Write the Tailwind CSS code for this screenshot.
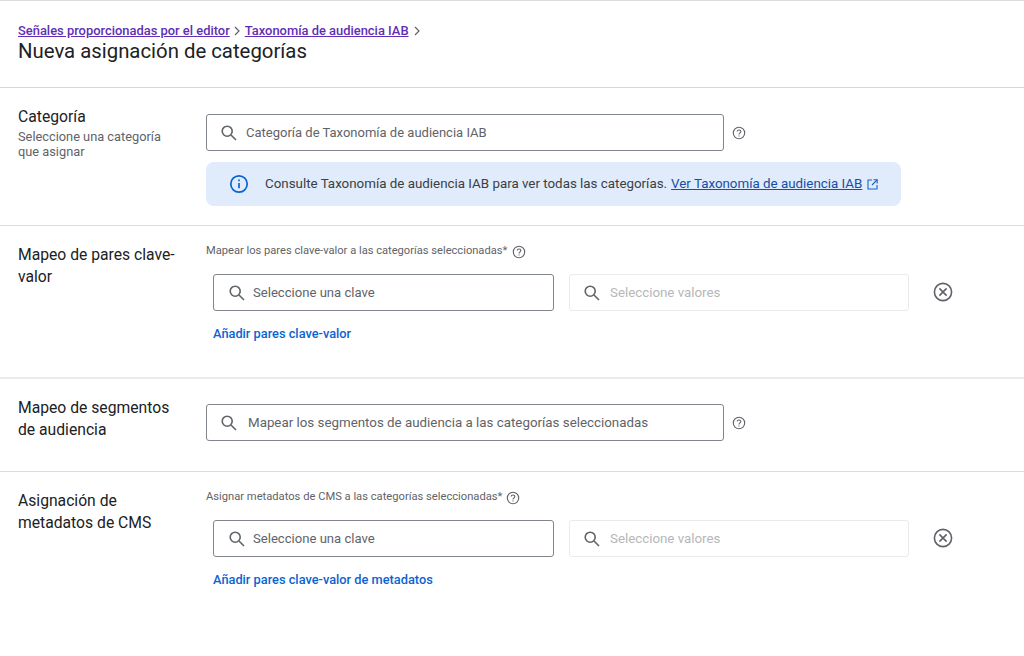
<!DOCTYPE html>
<html lang="es">
<head>
    <meta charset="UTF-8">
    <title>Nueva asignación de categorías</title>
    <script src="https://cdn.jsdelivr.net/npm/@tailwindcss/browser@4"></script>
</head>
<body class="bg-white font-['Roboto',sans-serif] w-[1024px] h-[656px] overflow-hidden">
    <!-- Header -->
    <header class="h-[88px] border-t border-b border-t-[#dadce0] border-b-[#d5d6da] pl-[18px] pt-[21px]">
        <nav class="flex items-center h-[18px] text-[12.92px] font-medium leading-[18px] text-[#5f2eb5]">
            <a href="#" class="underline">Señales proporcionadas por el editor</a>
            <svg class="w-[10px] h-[10px] ml-[2px] mr-[3px]" viewBox="0 0 10 10" fill="none" stroke="#5f6368" stroke-width="1.2"><path d="M3 1l4 4-4 4"/></svg>
            <a href="#" class="underline">Taxonomía de audiencia IAB</a>
            <svg class="w-[10px] h-[10px] mx-[3px]" viewBox="0 0 10 10" fill="none" stroke="#5f6368" stroke-width="1.2"><path d="M3 1l4 4-4 4"/></svg>
        </nav>
        <h1 class="text-[20.35px] leading-[24px] -mt-px text-[#202124]">Nueva asignación de categorías</h1>
    </header>

    <!-- Categoria -->
    <section class="flex h-[138px] border-b border-[#dadce0]">
        <div class="w-[206px] pl-[18px] pt-[19px] shrink-0">
            <h2 class="text-[15.7px] leading-[20px] font-[450] text-[#202124]">Categoría</h2>
            <p class="text-[12.8px] leading-[15px] text-[#5f6368] w-[160px] mt-[2px]">Seleccione una categoría que asignar</p>
        </div>
        <div class="pt-[26px]">
            <div class="flex items-center">
                <div class="flex items-center w-[518px] h-[37px] border border-[#80868b] rounded-[3px] pl-[13px] pt-px text-[13px] text-[#5f6368]">
                    <svg class="w-[18px] h-[18px] mr-[8px] -mt-px" viewBox="0 0 18 18" fill="none" stroke="#5f6368" stroke-width="1.6"><circle cx="7.2" cy="7.2" r="5"/><path d="M11 11l5 5"/></svg>
                    Categoría de Taxonomía de audiencia IAB
                </div>
                <svg class="w-[14px] h-[14px] ml-[8px]" viewBox="0 0 14 14" fill="none" stroke="#5f6368" stroke-width="1.1"><circle cx="7" cy="7" r="5.7"/><path d="M5.2 5.6c0-1 .8-1.6 1.8-1.6s1.8.7 1.8 1.6c0 1.3-1.8 1.3-1.8 2.8"/><path d="M7 9.4v1.1"/></svg>
            </div>
            <div class="flex items-center w-[695px] h-[44px] mt-[11px] bg-[#e0ecfb] rounded-[8px] pl-[23px] pt-px text-[13.35px] text-[#3c4043]">
                <svg class="w-[20px] h-[20px] mr-[16px] -mt-px" viewBox="0 0 20 20" fill="none" stroke="#0b63d1" stroke-width="1.7"><circle cx="10" cy="10" r="8.2"/><path d="M10 9v5.2"/><path d="M10 5.4v1.8"/></svg>
                <span>Consulte Taxonomía de audiencia IAB para ver todas las categorías.</span>
                <a href="#" class="underline text-[#174ea6] ml-[4px]">Ver Taxonomía de audiencia IAB</a>
                <svg class="w-[11px] h-[11px] ml-[5px] -mt-px" viewBox="0 0 11 11" fill="none" stroke="#1a62c4" stroke-width="1.1"><path d="M5 1H1v9h9V6"/><path d="M6.5.8h3.7v3.7"/><path d="M10 1L5 6"/></svg>
            </div>
        </div>
    </section>

    <!-- Mapeo de pares -->
    <section class="flex h-[153px] border-b-2 border-[#ebebee]">
        <div class="w-[206px] pl-[18px] pt-[18px] shrink-0">
            <h2 class="text-[15.7px] leading-[22px] font-[450] text-[#202124] w-[162px]">Mapeo de pares clave-valor</h2>
        </div>
        <div class="pt-[16px]">
            <div class="flex items-center h-[18px] text-[11.14px] text-[#5f6368]">
                Mapear los pares clave-valor a las categorías seleccionadas*
                <svg class="w-[14px] h-[14px] ml-[5px] mt-px" viewBox="0 0 14 14" fill="none" stroke="#5f6368" stroke-width="1.1"><circle cx="7" cy="7" r="5.7"/><path d="M5.2 5.6c0-1 .8-1.6 1.8-1.6s1.8.7 1.8 1.6c0 1.3-1.8 1.3-1.8 2.8"/><path d="M7 9.4v1.1"/></svg>
            </div>
            <div class="flex items-center ml-[7px] mt-[14px]">
                <div class="flex items-center w-[341px] h-[37px] border border-[#80868b] rounded-[3px] pl-[14px] pt-px text-[13.1px] text-[#5f6368]">
                    <svg class="w-[18px] h-[18px] mr-[7px] -mt-px" viewBox="0 0 18 18" fill="none" stroke="#5f6368" stroke-width="1.6"><circle cx="7.2" cy="7.2" r="5"/><path d="M11 11l5 5"/></svg>
                    Seleccione una clave
                </div>
                <div class="flex items-center w-[340px] h-[37px] ml-[15px] border border-[#e8eaed] rounded-[3px] pl-[13px] pt-px text-[13.3px] text-[#b5b7ba]">
                    <svg class="w-[18px] h-[18px] mr-[9px] -mt-px" viewBox="0 0 18 18" fill="none" stroke="#5f6368" stroke-width="1.6"><circle cx="7.2" cy="7.2" r="5"/><path d="M11 11l5 5"/></svg>
                    Seleccione valores
                </div>
                <svg class="w-[20px] h-[20px] ml-[24px] -mt-[2px]" viewBox="0 0 20 20" fill="none" stroke="#5f6368" stroke-width="1.6"><circle cx="10" cy="10" r="8.6"/><path d="M6.4 6.4l7.2 7.2M13.6 6.4l-7.2 7.2"/></svg>
            </div>
            <a href="#" class="block ml-[7px] mt-[14px] text-[12.8px] leading-[18px] font-medium text-[#0b63d1]">Añadir pares clave-valor</a>
        </div>
    </section>

    <!-- Mapeo de segmentos -->
    <section class="flex h-[93px] border-b border-[#dadce0]">
        <div class="w-[206px] pl-[18px] pt-[18px] shrink-0">
            <h2 class="text-[15.7px] leading-[22px] font-[450] text-[#202124] w-[162px]">Mapeo de segmentos de audiencia</h2>
        </div>
        <div class="pt-[25px] flex items-start">
            <div class="flex items-center w-[518px] h-[37px] border border-[#80868b] rounded-[3px] pl-[13px] pt-px text-[13.33px] text-[#5f6368]">
                <svg class="w-[18px] h-[18px] mr-[10px] -mt-px" viewBox="0 0 18 18" fill="none" stroke="#5f6368" stroke-width="1.6"><circle cx="7.2" cy="7.2" r="5"/><path d="M11 11l5 5"/></svg>
                Mapear los segmentos de audiencia a las categorías seleccionadas
            </div>
            <svg class="w-[14px] h-[14px] ml-[8px] mt-[12px]" viewBox="0 0 14 14" fill="none" stroke="#5f6368" stroke-width="1.1"><circle cx="7" cy="7" r="5.7"/><path d="M5.2 5.6c0-1 .8-1.6 1.8-1.6s1.8.7 1.8 1.6c0 1.3-1.8 1.3-1.8 2.8"/><path d="M7 9.4v1.1"/></svg>
        </div>
    </section>

    <!-- Metadatos -->
    <section class="flex">
        <div class="w-[206px] pl-[18px] pt-[18px] shrink-0">
            <h2 class="text-[15.7px] leading-[22px] font-[450] text-[#202124] w-[162px]">Asignación de metadatos de CMS</h2>
        </div>
        <div class="pt-[16px]">
            <div class="flex items-center h-[18px] text-[11.18px] text-[#5f6368]">
                Asignar metadatos de CMS a las categorías seleccionadas*
                <svg class="w-[14px] h-[14px] ml-[4px] mt-px" viewBox="0 0 14 14" fill="none" stroke="#5f6368" stroke-width="1.1"><circle cx="7" cy="7" r="5.7"/><path d="M5.2 5.6c0-1 .8-1.6 1.8-1.6s1.8.7 1.8 1.6c0 1.3-1.8 1.3-1.8 2.8"/><path d="M7 9.4v1.1"/></svg>
            </div>
            <div class="flex items-center ml-[7px] mt-[14px]">
                <div class="flex items-center w-[341px] h-[37px] border border-[#80868b] rounded-[3px] pl-[14px] pt-px text-[13.1px] text-[#5f6368]">
                    <svg class="w-[18px] h-[18px] mr-[7px] -mt-px" viewBox="0 0 18 18" fill="none" stroke="#5f6368" stroke-width="1.6"><circle cx="7.2" cy="7.2" r="5"/><path d="M11 11l5 5"/></svg>
                    Seleccione una clave
                </div>
                <div class="flex items-center w-[340px] h-[37px] ml-[15px] border border-[#e8eaed] rounded-[3px] pl-[13px] pt-px text-[13.3px] text-[#b5b7ba]">
                    <svg class="w-[18px] h-[18px] mr-[9px] -mt-px" viewBox="0 0 18 18" fill="none" stroke="#5f6368" stroke-width="1.6"><circle cx="7.2" cy="7.2" r="5"/><path d="M11 11l5 5"/></svg>
                    Seleccione valores
                </div>
                <svg class="w-[20px] h-[20px] ml-[24px] -mt-[2px]" viewBox="0 0 20 20" fill="none" stroke="#5f6368" stroke-width="1.6"><circle cx="10" cy="10" r="8.6"/><path d="M6.4 6.4l7.2 7.2M13.6 6.4l-7.2 7.2"/></svg>
            </div>
            <a href="#" class="block ml-[7px] mt-[14px] text-[12.8px] leading-[18px] font-medium text-[#0b63d1]">Añadir pares clave-valor de metadatos</a>
        </div>
    </section>
</body>
</html>
